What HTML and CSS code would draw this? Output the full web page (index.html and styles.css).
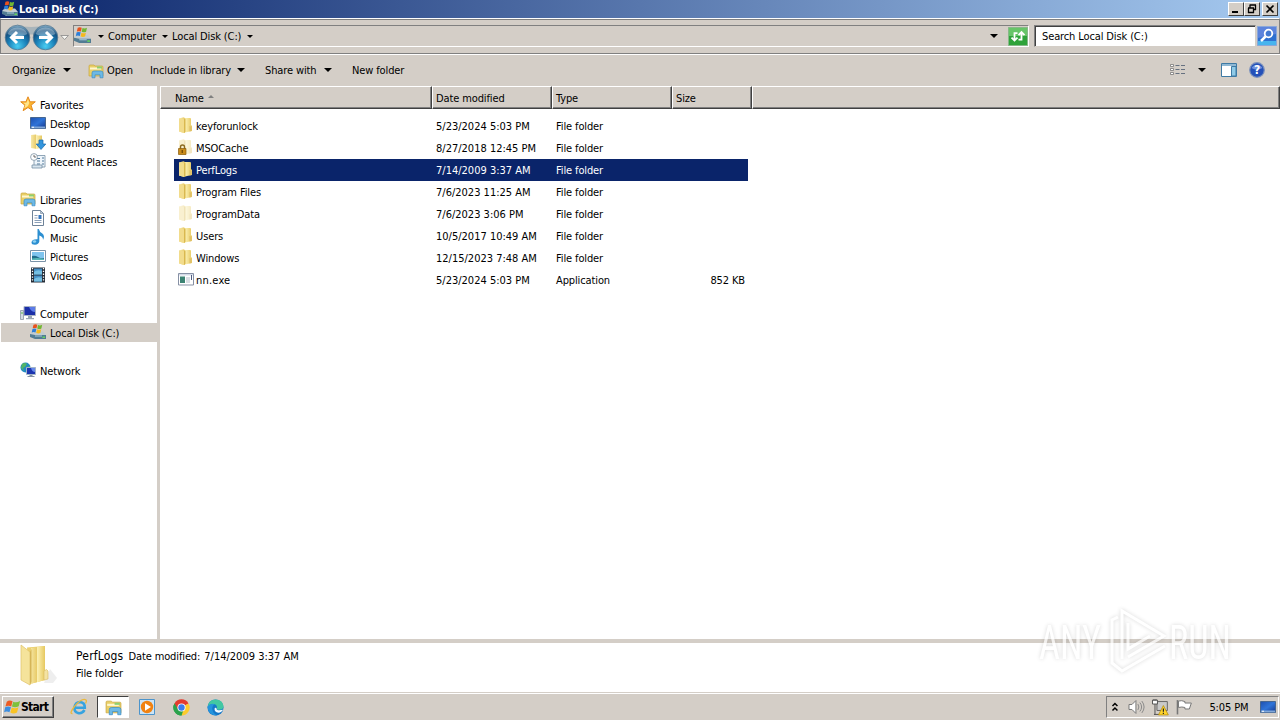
FILE: index.html
```html
<!DOCTYPE html>
<html lang="en">
<head>
    <meta charset="UTF-8">
    <meta name="viewport" content="width=device-width, initial-scale=1.0">
    <title>Local Disk (C:)</title>
    <link rel="stylesheet" href="styles.css">
</head>
<body>

    <!-- shared icons -->
    <svg class="defs" width="0" height="0">
        <defs>
            <linearGradient id="gold" x1="0" x2="1"><stop offset="0" stop-color="#f7e9a8"/><stop offset=".45" stop-color="#e8cb6a"/><stop offset=".5" stop-color="#fbefb0"/><stop offset="1" stop-color="#e6c860"/></linearGradient>
            <linearGradient id="screen" x1="0" x2="1" y2="1"><stop offset="0" stop-color="#1e4fae"/><stop offset=".5" stop-color="#2f74d8"/><stop offset="1" stop-color="#16368c"/></linearGradient>
            <radialGradient id="orb" cx=".5" cy=".85" r=".85"><stop offset="0" stop-color="#49cdf2"/><stop offset=".45" stop-color="#1a80b8"/><stop offset=".75" stop-color="#155080"/><stop offset="1" stop-color="#8db4cc"/></radialGradient>
        </defs>
        <symbol id="i-flag" viewBox="0 0 20 18">
            <path d="M3 3q3-2.500 6.500-.5L8 8.300q-3-1.500-6.500 0z" fill="#ec5b23"/>
            <path d="M10.300 3q3.500 1.500 7.700-.8l-1.600 6q-4 2-7.600.2z" fill="#7ec13c"/>
            <path d="M1.200 9.300q3.300-1.500 6.500 0L6 15q-3-1.700-6 0z" fill="#3c8ee0"/>
            <path d="M8.600 9.500q3.500 1.800 7.500-.1l-1.600 5.800q-4 2-7.500 0z" fill="#f9c324"/>
        </symbol>
        <symbol id="i-disk" viewBox="0 0 16 16">
            <path d="M0 10l2.500-2.500h10.500l3 3.500v4H4z" fill="#c3ccd0"/>
            <path d="M0 10l5 1h11v4H5l-5-2z" fill="#527c93"/>
            <path d="M5 11.500h7v1H5z" fill="#a9cbd9"/>
            <path d="M12.500 12.500h2.500v1.500h-2.500z" fill="#65d65c"/>
            <path d="M3.500.8q2-1.200 3.800 0L6.500 4.300q-1.700-.8-3.800 0z" fill="#e8521d"/>
            <path d="M8 1q2 1 4.200-.2l-.8 3.600q-2 1-4.200 0z" fill="#72b733"/>
            <path d="M2.500 5q2-.8 3.800 0L5.500 8.400q-1.800-.8-3.800 0z" fill="#2c7ed8"/>
            <path d="M7 5.300q2 1 4.200 0L10.400 9q-2 .8-4.200 0z" fill="#f5b91c"/>
        </symbol>
        <symbol id="i-folder" viewBox="0 0 16 16">
            <path d="M1 1.500L5.500.300l1.500.7h5q1 0 1 1v6l1 1v5l-6 1.200-2 .8-5-1.500z" fill="url(#gold)"/>
            <path d="M1 1.500l5 .8V16l-5-1.500z" fill="#f2dc8c"/>
            <path d="M6 2.300l1.500-.8v13.300L6 16z" fill="#d9b84f"/>
            <path d="M11.500 9l2 .8V14l-2 .5z" fill="#dfc069"/>
        </symbol>
        <symbol id="i-library" viewBox="0 0 16 16">
            <path d="M1 3q0-1 1-1h4l1 1h7q1 0 1 1v9H1z" fill="#e9cf68" stroke="#c9a640" stroke-width=".7"/>
            <path d="M2 4.500h11v2H2z" fill="#fff7cf"/>
            <path d="M9 3.500h5v2H9z" fill="#8ed06f"/>
            <path d="M4 14.800V10q0-2 2-2h7q2 0 2 2v4.800h-3v-3H7v3z" fill="#6db9e5" stroke="#3b8cc5" stroke-width=".7"/>
        </symbol>
        <symbol id="i-star" viewBox="0 0 16 16">
            <path d="M8 .8l2.100 5h5.200l-4.200 3.400 1.700 5.500L8 11.500l-4.800 3.200 1.700-5.500L.7 5.800h5.200z" fill="#fbb52f" stroke="#e58a20" stroke-width="1"/>
            <path d="M8 3l1.300 4L8 10l-4 2.500 1.500-4L3 6.700h3.500z" fill="#ffe58d"/>
        </symbol>
        <symbol id="i-desktop" viewBox="0 0 16 16">
            <path d="M.5 2.500h15v11H.5z" fill="url(#screen)" stroke="#47668f"/>
            <path d="M1 11.500h14v1.800H1z" fill="#81a8d9"/>
            <path d="M2 11.800h2v1H2z" fill="#fff"/>
        </symbol>
        <symbol id="i-download" viewBox="0 0 16 16">
            <path d="M1 1l5-.5 2 1h4V13l-5 2-6-1z" fill="url(#gold)"/>
            <path d="M9 6h4v4h2.800L11 15.500 6.200 10H9z" fill="#3395dd" stroke="#1769a9" stroke-width=".7"/>
        </symbol>
        <symbol id="i-recent" viewBox="0 0 16 16">
            <path d="M4 2.500h11v11.500H4z" fill="#eef5fb" stroke="#7690a5" stroke-width=".8"/>
            <path d="M7 5.500h3M12 5h2M7 8h3M12 8h2M7 11h3M12 11h2" stroke="#4e7798"/>
            <path d="M2 12h10v3H2z" fill="#d8e5ee" stroke="#7690a5" stroke-width=".8"/>
            <circle cx="4" cy="4" r="3.400" fill="#fff" stroke="#7e93a3" stroke-width=".8"/>
            <path d="M4 2v2h2" fill="none" stroke="#444" stroke-width=".8"/>
        </symbol>
        <symbol id="i-doc" viewBox="0 0 16 16">
            <path d="M2.500.5h8l3 3v12h-11z" fill="#fff" stroke="#6e8298"/>
            <path d="M10.500.5v3h3z" fill="#bccbd8" stroke="#6e8298" stroke-width=".6"/>
            <path d="M4.500 5.500h3M4.500 8h3M4.500 10.500h7M4.500 12.500h7" stroke="#8a9fb8"/>
            <path d="M8.500 5h3v4h-3z" fill="#3475bd"/>
        </symbol>
        <symbol id="i-music" viewBox="0 0 16 16">
            <path d="M7.500 0h1.300q.7 3 3.500 4.500 3 2.500.7 6.500.3-3.500-3.700-4.500v6q-.5 3-4.300 3.300-3.700 0-3.500-2.500.5-3.300 6-3z" fill="#2c8fd1"/>
            <ellipse cx="4.500" cy="12.500" rx="1.700" ry="1.200" fill="#8fd2f2"/>
        </symbol>
        <symbol id="i-picture" viewBox="0 0 16 16">
            <path d="M.5 2.500h15v11H.5z" fill="#fff" stroke="#7b93a8"/>
            <path d="M2 4h12v8H2z" fill="#7fc4ee"/>
            <path d="M2 8q3-1 6 1t6 1v2H2z" fill="#216e8c"/>
            <path d="M2 10.500q6-1 12 .5v1H2z" fill="#58b8b6"/>
        </symbol>
        <symbol id="i-video" viewBox="0 0 16 16">
            <path d="M1 .5h14v15H1z" fill="#252d38"/>
            <path d="M4 1.500h8v6H4zM4 8.500h8v6H4z" fill="#4690c6"/>
            <path d="M4 5q3-3 8-1v3.500H4zM4 12q4-3 8-1v3.500H4z" fill="#75bfe2"/>
            <path d="M2.500 1v14M13.500 1v14" stroke="#fff" stroke-width="1.300" stroke-dasharray="1.300 1.500"/>
        </symbol>
        <symbol id="i-computer" viewBox="0 0 16 16">
            <path d="M4 1.500h11.500v9H4z" fill="#1b2fa8" stroke="#aab4c4"/>
            <path d="M9 2h6v5q-4 0-6-5z" fill="#5b7be8"/>
            <path d="M8 11h4v2H8zM6 13h8v1.300H6z" fill="#9ba7b5"/>
            <path d="M.5 5.500h3v9h-3z" fill="#d4dbe2" stroke="#8b96a3" stroke-width=".8"/>
            <path d="M1.500 7h1v2h-1z" fill="#55bb48"/>
        </symbol>
        <symbol id="i-network" viewBox="0 0 16 16">
            <circle cx="5.500" cy="5.500" r="5" fill="#2189c3"/>
            <path d="M2 2q3-2 5 0L5 5 3 6 4 9 1 6zM7 5l3-1v5H7z" fill="#52b566"/>
            <path d="M6.500 5.500h9v7h-9z" fill="#1c35b0" stroke="#a3b4c8"/>
            <path d="M11 6h4v4q-3 0-4-4z" fill="#6688ea"/>
            <path d="M9.500 13h3v1h2v1h-7v-1h2z" fill="#8594a5"/>
        </symbol>
        <symbol id="i-exe" viewBox="0 0 16 16">
            <path d="M.5 2.500h15v11.500H.5z" fill="#fff" stroke="#8791a5"/>
            <path d="M1 3h14v1.500H1z" fill="#d4dbe7"/>
            <path d="M2 5.500h5v6.500H2z" fill="#3c8373"/>
            <path d="M8 7h4M8 9h4M8 11h4" stroke="#b5bdc9"/>
            <path d="M13.500 4v5" stroke="#4e5c80"/>
        </symbol>
    </svg>

    <div class="window">
        <div class="titlebar">
            <svg class="icon"><use href="#i-disk"/></svg>
            <h1>Local Disk (C:)</h1>
            <div class="controls">
                <button class="ctl"><svg width="12" height="10"><path d="M2 8h6" stroke="#000" stroke-width="2"/></svg></button>
                <button class="ctl"><svg width="12" height="10"><path d="M4 1h6M4 .5v3M9.500 1v5M8 5.500h2M2 4h6M2.500 4v5M7.500 4v5M2 8.500h6" fill="none" stroke="#000" stroke-width="1.300"/></svg></button>
                <button class="ctl close"><svg width="12" height="10"><path d="M2.500 1.500l7 7M9.500 1.500l-7 7" stroke="#000" stroke-width="1.700"/></svg></button>
            </div>
        </div>

        <div class="navbar">
            <svg class="orbs" width="68" height="30" viewBox="0 0 68 30">
                <path d="M16 2.500q14 5 29 0v10H16z" fill="#a9b4ba"/>
                <g fill="url(#orb)" stroke="#587990" stroke-width=".8"><circle cx="16.500" cy="15.500" r="12.300"/><circle cx="44.500" cy="15.500" r="12.300"/></g>
                <path d="M6.500 12a10.500 9.500 0 0 1 20 0q-10 5-20 0zM34.500 12a10.500 9.500 0 0 1 20 0q-10 5-20 0z" fill="#fff" opacity=".33"/>
                <path d="M23 15.500H11.500M16 10l-5.500 5.500 5.500 5.500M38 15.500h11.500M45 10l5.500 5.500-5.500 5.500" fill="none" stroke="#fff" stroke-width="3"/>
                <path d="M59.800 13.500h7.600l-3.800 4z" fill="#f8f7f3" stroke="#888" stroke-width=".8"/>
            </svg>
            <div class="address">
                <svg class="drive"><use href="#i-disk"/></svg>
                <i class="arrow small"></i><span class="crumb computer">Computer</span>
                <i class="arrow small"></i><span class="crumb local">Local Disk (C:)</span>
                <i class="arrow small"></i>
                <i class="arrow drop"></i>
                <svg class="refresh" width="20" height="19" viewBox="0 0 20 19">
                    <path d="M.5.5h19v18H.5z" fill="#2fa33a" stroke="#87b889"/>
                    <path d="M1 1h18v8H1z" fill="#67c568"/>
                    <path d="M9.500 12.500H6.500V6M3.500 8l3-3 3 3M10.500 6H13.500v7M10.500 10.500l3 3 3-3" transform="matrix(-1 0 0 1 20 0) rotate(180 10 9.300)" fill="none" stroke="#fff" stroke-width="1.800"/>
                </svg>
            </div>
            <div class="search">Search Local Disk (C:)</div>
            <svg class="find" width="20" height="20" viewBox="0 0 20 20">
                <path d="M.5.5h19v19H.5z" fill="#2e70d0" stroke="#8aa7d8"/>
                <path d="M1 1h18v7L1 12z" fill="#5c83dc"/>
                <path d="M1 15h18v4H1z" fill="#48b4ee"/>
                <circle cx="11.500" cy="7.500" r="3.800" fill="#4379d1" stroke="#fff" stroke-width="1.800"/>
                <path d="M8.500 10.500L4 15" stroke="#fff" stroke-width="2.500"/>
            </svg>
        </div>

        <div class="toolbar">
            <span class="t-organize">Organize</span><i class="arrow"></i>
            <svg class="icon t-lib"><use href="#i-library"/></svg><span class="t-open">Open</span>
            <span class="t-include">Include in library</span><i class="arrow"></i>
            <span class="t-share">Share with</span><i class="arrow"></i>
            <span class="t-new">New folder</span>
            <div class="view-tools">
                <svg width="17" height="14" viewBox="0 0 17 14"><path d="M.5 1.500h3v2h-3zM.5 5.500h3v2h-3zM.5 9.500h3v2h-3z" fill="#fff" stroke="#777" stroke-width=".8"/><path d="M5.500 2.500h4M11 2.500h4M5.500 6.500h4M11 6.500h4M5.500 10.500h4M11 10.500h4" stroke="#667180"/></svg>
                <i class="arrow"></i>
                <svg class="pane" width="16" height="14" viewBox="0 0 16 14"><path d="M.5.5h15v13H.5z" fill="#fff" stroke="#3e7aa4"/><path d="M1 1h14v2H1z" fill="#8fb8d4"/><path d="M10.500 3.500h4.500v9.500h-4.500z" fill="#8fcbe8" stroke="#3e7aa4"/></svg>
                <svg width="16" height="16" viewBox="0 0 16 16"><circle cx="8" cy="8" r="7.300" fill="#2450b8" stroke="#7b91bd" stroke-width="1.200"/><path d="M2.500 6a6 5 0 0 1 11 0q-6 3-11 0z" fill="#6e91dd"/><text x="8" y="12.300" text-anchor="middle" class="help-mark">?</text></svg>
            </div>
        </div>

        <div class="main">
            <div class="sidebar">
                <ul>
                    <li class="head"><svg class="icon"><use href="#i-star"/></svg><span>Favorites</span></li>
                    <li><svg class="icon"><use href="#i-desktop"/></svg><span>Desktop</span></li>
                    <li><svg class="icon"><use href="#i-download"/></svg><span>Downloads</span></li>
                    <li><svg class="icon"><use href="#i-recent"/></svg><span>Recent Places</span></li>
                </ul>
                <ul>
                    <li class="head"><svg class="icon"><use href="#i-library"/></svg><span>Libraries</span></li>
                    <li><svg class="icon"><use href="#i-doc"/></svg><span>Documents</span></li>
                    <li><svg class="icon"><use href="#i-music"/></svg><span>Music</span></li>
                    <li><svg class="icon"><use href="#i-picture"/></svg><span>Pictures</span></li>
                    <li><svg class="icon"><use href="#i-video"/></svg><span>Videos</span></li>
                </ul>
                <ul>
                    <li class="head"><svg class="icon"><use href="#i-computer"/></svg><span>Computer</span></li>
                    <li class="current"><svg class="icon"><use href="#i-disk"/></svg><span>Local Disk (C:)</span></li>
                </ul>
                <ul>
                    <li class="head"><svg class="icon"><use href="#i-network"/></svg><span>Network</span></li>
                </ul>
            </div>

            <div class="list">
                <div class="columns">
                    <div class="name">Name<i class="sort"></i></div>
                    <div>Date modified</div>
                    <div>Type</div>
                    <div>Size</div>
                    <div></div>
                </div>
                <div class="row"><svg class="icon"><use href="#i-folder"/></svg><span>keyforunlock</span><span class="date">5/23/2024 5:03 PM</span><span>File folder</span><span></span></div>
                <div class="row"><svg class="icon" viewBox="0 0 16 16"><g opacity=".4"><use href="#i-folder" width="16" height="16"/></g><path d="M2.500 10V8q0-2 2-2t2 2v2" fill="none" stroke="#8b6a20" stroke-width="1.400"/><path d="M.5 9.500h7.500v6H.5z" fill="#c98c1c" stroke="#8a5b0c" stroke-width=".7"/><path d="M4.200 11v3" stroke="#553500"/></svg><span>MSOCache</span><span class="date">8/27/2018 12:45 PM</span><span>File folder</span><span></span></div>
                <div class="row selected"><svg class="icon"><use href="#i-folder"/></svg><span>PerfLogs</span><span class="date">7/14/2009 3:37 AM</span><span>File folder</span><span></span></div>
                <div class="row"><svg class="icon"><use href="#i-folder"/></svg><span>Program Files</span><span class="date">7/6/2023 11:25 AM</span><span>File folder</span><span></span></div>
                <div class="row"><svg class="icon hidden-item"><use href="#i-folder"/></svg><span>ProgramData</span><span class="date">7/6/2023 3:06 PM</span><span>File folder</span><span></span></div>
                <div class="row"><svg class="icon"><use href="#i-folder"/></svg><span>Users</span><span class="date">10/5/2017 10:49 AM</span><span>File folder</span><span></span></div>
                <div class="row"><svg class="icon"><use href="#i-folder"/></svg><span>Windows</span><span class="date">12/15/2023 7:48 AM</span><span>File folder</span><span></span></div>
                <div class="row"><svg class="icon"><use href="#i-exe"/></svg><span class="exe">nn.exe</span><span class="date">5/23/2024 5:03 PM</span><span>Application</span><span>852 KB</span></div>
            </div>
        </div>

        <div class="details">
            <svg width="42" height="44" viewBox="0 0 42 44">
                <path d="M25 39l6-14 7 9-4 5z" fill="#ddd" opacity=".5"/>
                <path d="M8 3.500l18-1.500v34l-15 4z" fill="#ebd06e"/>
                <path d="M12 4l14-2v34l-15 4z" fill="url(#gold)"/>
                <path d="M2 1l9 7v33l-9-5z" fill="#f5e39b" stroke="#dfc269" stroke-width=".7"/>
                <path d="M11 8l1.500-3v33l-1.500 3z" fill="#d5b558"/>
                <path d="M25 27q3-3 4 0v8l-4 1z" fill="#f4e3a2" stroke="#d8bb67" stroke-width=".6"/>
            </svg>
            <div>
                <p><span class="item-name">PerfLogs</span><span class="label">Date modified:</span><span class="date">7/14/2009 3:37 AM</span></p>
                <p>File folder</p>
            </div>
        </div>
    </div>

    <div class="taskbar">
        <button class="start"><svg width="18" height="16"><use href="#i-flag"/></svg>Start</button>
        <div class="pinned">
            <div class="task"><svg width="18" height="18" viewBox="0 0 18 18"><path d="M14.500 12Q12 16 8 15q-4-1-3.500-6Q5.500 4 10 4q5 .5 4.800 5.800H5" fill="none" stroke="#36a3e0" stroke-width="2.600"/><path d="M2.500 15.500Q-1 16 4 9 12-.5 16 2q1 1-.5 3.500" fill="none" stroke="#eab93e" stroke-width="1.300"/></svg></div>
            <div class="task active"><svg width="17" height="17"><use href="#i-library"/></svg></div>
            <div class="task"><svg width="16" height="16" viewBox="0 0 16 16"><path d="M.5.5h15v15H.5z" fill="#cce4f6" stroke="#4c94cb"/><circle cx="8" cy="8" r="6.200" fill="#f18211"/><path d="M6 4.300l6 3.700-6 3.700z" fill="#fff"/></svg></div>
            <div class="task"><svg width="17" height="17" viewBox="0 0 18 18"><path d="M9 9L1.600 4.700A8.500 8.500 0 0 1 16.400 4.700z" fill="#e33b2e"/><path d="M9 9l7.400-4.300A8.500 8.500 0 0 1 9 17.500z" fill="#fccb2d"/><path d="M9 9v8.500A8.500 8.500 0 0 1 1.600 4.700z" fill="#2ba24c"/><path d="M1.600 4.700L5 11l4-2V4.700z" fill="#e33b2e"/><path d="M3.500 8L5 11l4 2 2-1-2 5.500A8.500 8.500 0 0 1 1.600 4.700z" fill="#2ba24c"/><circle cx="9" cy="9" r="4.300" fill="#fff"/><circle cx="9" cy="9" r="3.400" fill="#3b7ded"/></svg></div>
            <div class="task"><svg width="17" height="17" viewBox="0 0 18 18"><circle cx="9" cy="9" r="8.500" fill="#1577c8"/><path d="M.6 8Q2 .5 9 .5q7.500 0 8.500 7 0 4-4.500 4-3 0-2.500-2 .5-3-2.500-4Q3.500 4.500.6 8z" fill="#42c8a2"/><path d="M.6 8Q4 4 8 5.500q-3.500 2.500-2 7 1 3.500 5 4.800Q1 18 .6 8z" fill="#2494dd"/><path d="M10 9.500q-.5 3.500 7 2-1.500 3-5 3-4-.5-4-4 0-1.500 2-1z" fill="#f4fbff"/></svg></div>
        </div>
        <div class="tray">
            <svg class="chev" width="8" height="10" viewBox="0 0 8 10"><path d="M1.500 4L4 1.500 6.500 4M1.500 8.500L4 6l2.500 2.500" fill="none" stroke="#000" stroke-width="1.500"/></svg>
            <svg class="vol" width="17" height="16" viewBox="0 0 17 16"><path d="M1 5.500h3l4-4v13l-4-4H1z" fill="#fff" stroke="#777"/><path d="M10 5q2 3 0 6M12 3.500q3.500 4.500 0 9M14 2q4.500 6 0 12" fill="none" stroke="#8a8a8a"/></svg>
            <svg class="net" width="17" height="17" viewBox="0 0 17 17"><path d="M5 2.500h10.500v9H5z" fill="#c9c9c9" stroke="#666"/><path d="M.5 1h5v4h-5zM2 0v2M4 0v2M3 5v11M2 15.500h8" fill="#fff" stroke="#555"/><path d="M11.500 6.500l5 9.500h-10z" fill="#ffd42a" stroke="#b08605" stroke-width=".7"/><path d="M11.500 9.500v3.300M11.500 13.800v1.300" stroke="#222" stroke-width="1.200"/></svg>
            <svg class="flag" width="17" height="16" viewBox="0 0 17 16"><path d="M1.500 1v14.500" stroke="#777" stroke-width="1.600"/><path d="M2.500 2q3-1 6.500.5v1.500h6.500L13.500 10H9V8.500q-3-1-6.500 0z" fill="#fff" stroke="#777"/></svg>
            <span class="clock">5:05 PM</span>
            <svg class="icon"><use href="#i-desktop"/></svg>
        </div>
    </div>

    <!-- watermark over the window -->
    <svg class="watermark" width="210" height="76" viewBox="0 0 210 76">
        <g class="mark-text">
            <text x="8" y="56" textLength="62" lengthAdjust="spacingAndGlyphs">ANY</text>
            <text x="138" y="56" textLength="62" lengthAdjust="spacingAndGlyphs">RUN</text>
        </g>
        <path class="mark-logo" d="M87 14l-6 3v43l10 8 43-25M91 56V8l42 25-36 21M97 20v26l22-13"/>
    </svg>

</body>
</html>
```
FILE: styles.css
```css
* {
    box-sizing: border-box;
}

body {
    margin: 0;
    width: 1280px;
    height: 720px;
    overflow: hidden;
    display: flex;
    flex-direction: column;
    position: relative;
    background: #fff;
    color: #000;
    font-family: Tahoma, "DejaVu Sans Condensed", "DejaVu Sans", sans-serif;
    font-stretch: condensed;
    font-size: 11px;
    letter-spacing: -0.12px;
    line-height: 14px;
    white-space: nowrap;
}

.defs {
    position: absolute;
}

.icon {
    width: 16px;
    height: 16px;
    flex: none;
}

h1, p, ul {
    margin: 0;
    padding: 0;
}

.window {
    height: 692px;
    display: flex;
    flex-direction: column;
}

/* title bar */
.titlebar {
    height: 18px;
    display: flex;
    align-items: center;
    padding: 0 2px;
    background: linear-gradient(90deg, #0a246a, #a6caf0);
}

.titlebar h1 {
    flex: 1;
    margin-left: 1px;
    padding-top: 1px;
    color: #fff;
    font-size: 11px;
    font-weight: bold;
    letter-spacing: -0.05px;
}

.controls {
    display: flex;
}

.ctl {
    width: 16px;
    height: 14px;
    padding: 0;
    display: flex;
    align-items: center;
    justify-content: center;
    background: #d4cec7;
    border: 1px solid;
    border-color: #fff #404040 #404040 #fff;
}

.ctl.close {
    margin-left: 2px;
}

/* address bar */
.navbar {
    height: 36px;
    display: flex;
    align-items: center;
    background: #d4cec7;
    border: 1px solid #808080;
    border-top-color: #fff;
    box-shadow: inset 0 1px #808080;
}

.orbs {
    width: 68px;
    margin-top: 1px;
    flex: none;
}

.address {
    width: 956px;
    height: 22px;
    margin-left: 4px;
    display: flex;
    align-items: center;
    border: 1px solid;
    border-color: #808080 #fff #fff #808080;
}

.drive {
    width: 17px;
    height: 17px;
    margin: 0 7px 2px 0;
}

.arrow {
    width: 0;
    height: 0;
    flex: none;
    border: 4px solid transparent;
    border-top-color: #000;
    border-bottom: 0;
}

.arrow.small {
    border-width: 3px;
    border-bottom: 0;
}

.crumb {
    margin: 1px 5px 0 4px;
}

.computer {
    width: 49px;
}

.local {
    width: 70px;
}

.drop {
    margin-left: auto;
    margin-right: 10px;
}

.search {
    width: 222px;
    height: 22px;
    margin-left: 5px;
    padding: 4px 7px;
    background: #fff;
    border: 1px solid;
    border-color: #808080 #d4cec7 #d4cec7 #808080;
    box-shadow: inset 1px 1px #404040;
}

.find {
    margin-left: 1px;
}

/* command bar */
.toolbar {
    height: 32px;
    padding: 0 15px 1px 12px;
    display: flex;
    align-items: center;
    background: #d4cec7;
    border-top: 1px solid #fff;
}

.toolbar span {
    padding-top: 1px;
}

.t-organize { width: 51px; }
.t-lib { margin: 1px 3px 0 17px; }
.t-open { width: 43px; }
.t-include { width: 87px; }
.t-share { width: 59px; margin-left: 20px; }
.t-new { margin-left: 20px; }

.view-tools {
    margin-left: auto;
    display: flex;
    align-items: center;
}

.view-tools .arrow {
    margin: 0 15px 0 11px;
}

.pane {
    margin-right: 12px;
}

.help-mark {
    fill: #fff;
    font-size: 12px;
    font-weight: bold;
}

/* body */
.main {
    height: 553px;
    display: flex;
}

.sidebar {
    width: 160px;
    padding: 9px 0 0 1px;
    border-right: 3px solid #d4cec7;
}

.sidebar ul {
    list-style: none;
    margin-bottom: 19px;
}

.sidebar li {
    height: 19px;
    padding-left: 29px;
    display: flex;
    align-items: center;
    gap: 4px;
}

.sidebar li span {
    padding-top: 2px;
}

.sidebar .icon {
    margin-bottom: 1px;
}

.sidebar .head {
    padding-left: 19px;
}

.sidebar .current {
    background: #d4cec7;
}

.list {
    flex: 1;
}

.columns {
    height: 23px;
    margin-bottom: 6px;
    display: grid;
    grid-template-columns: 272px 120px 120px 80px 1fr;
}

.columns div {
    padding: 5px 0 0 3px;
    background: #d4cec7;
    border: 1px solid;
    border-color: #fff #404040 #404040 #fff;
    box-shadow: inset -1px -1px #808080;
}

.columns .name {
    padding-left: 14px;
}

.sort {
    display: inline-block;
    margin: 0 0 4px 4px;
    border: 3px solid transparent;
    border-top: 0;
    border-bottom-color: #808080;
}

.row {
    width: 574px;
    height: 22px;
    margin-left: 14px;
    padding: 0 3px 0 4px;
    display: grid;
    grid-template-columns: 18px 240px 120px 100px 1fr;
    align-items: center;
}

.row span {
    padding-top: 2px;
}

.row .icon {
    margin-bottom: 2px;
}

.row span:last-child {
    text-align: right;
}

.row.selected {
    background: #0a246a;
    color: #fff;
}

.date {
    letter-spacing: 0;
}

.exe {
    letter-spacing: 0.2px;
}

.hidden-item {
    opacity: 0.4;
}

.details {
    height: 53px;
    padding: 1px 0 0 19px;
    display: flex;
    gap: 15px;
    border-top: 4px solid #d4cec7;
}

.details p {
    height: 18px;
    padding-top: 5px;
}

.item-name {
    margin-right: 5px;
    font-size: 12px;
    letter-spacing: 0.2px;
}

.label {
    margin-right: 4px;
}

/* taskbar */
.taskbar {
    height: 28px;
    display: flex;
    align-items: center;
    padding: 1px 1px 0 2px;
    background: #d4cec7;
    border-top: 1px solid #d4cec7;
    box-shadow: inset 0 1px #fff;
}

.start {
    width: 52px;
    height: 22px;
    padding: 0 0 0 1px;
    display: flex;
    align-items: center;
    background: #d4cec7;
    border: 1px solid;
    border-color: #fff #404040 #404040 #fff;
    box-shadow: inset -1px -1px #808080;
    font: bold 12px "DejaVu Sans Condensed", "DejaVu Sans", sans-serif;
    font-stretch: condensed;
    letter-spacing: -0.7px;
}

.start svg {
    margin-right: -1px;
}

.pinned {
    margin-left: 9px;
    display: flex;
    gap: 2px;
}

.task {
    width: 32px;
    height: 22px;
    display: flex;
    align-items: center;
    justify-content: center;
}

.task.active {
    background: #fff;
    border: 1px solid;
    border-color: #404040 #fff #fff #404040;
}

.tray {
    width: 173px;
    height: 22px;
    margin-left: auto;
    padding: 0 2px 0 4px;
    display: flex;
    align-items: center;
    border: 1px solid;
    border-color: #808080 #fff #fff #808080;
}

.vol { margin-left: 9px; }
.net { margin-left: 7px; }
.flag { margin-left: 7px; }

.clock {
    width: 41px;
    margin: 1px 10px 0 17px;
}

.watermark {
    position: absolute;
    left: 1031px;
    top: 603px;
    filter: drop-shadow(0 0 2px rgba(0, 0, 0, 0.22));
    opacity: 0.7;
}

.mark-text {
    fill: #fff;
    font-family: Roboto, sans-serif;
    font-size: 49px;
    letter-spacing: 0;
}

.mark-logo {
    fill: none;
    stroke: #fff;
    stroke-width: 3;
}
```
